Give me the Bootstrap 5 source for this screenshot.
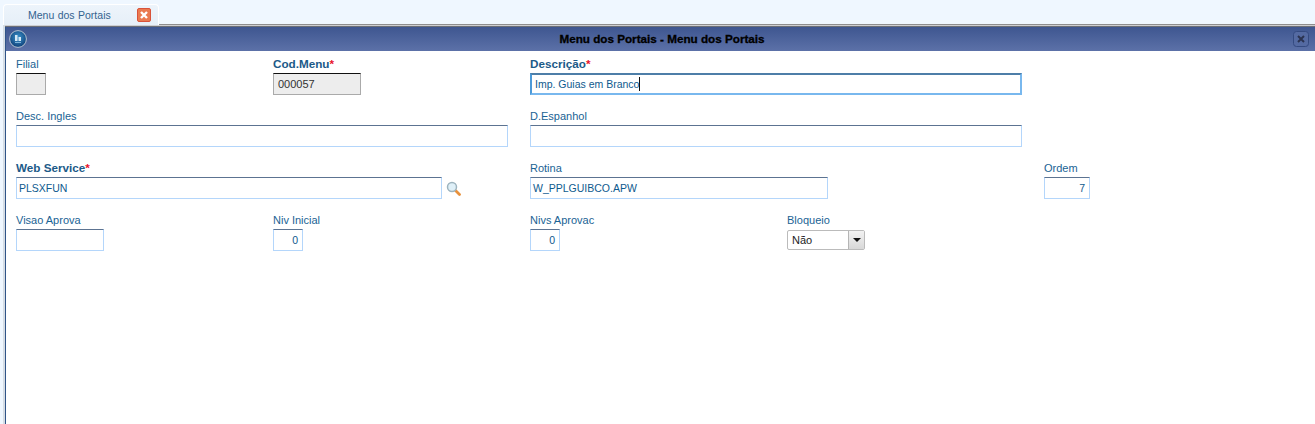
<!DOCTYPE html>
<html lang="pt">
<head>
<meta charset="utf-8">
<title>Menu dos Portais</title>
<link rel="stylesheet" href="https://cdn.jsdelivr.net/npm/bootstrap@5.3.0/dist/css/bootstrap.min.css">
<style>
html,body{height:100%;overflow:hidden}
body{background:#eff7ff;font-family:"Liberation Sans",Arial,sans-serif;font-size:11px;color:#0e5a8e;display:flex;flex-direction:column}
.tabbar{height:24px;padding:4px 0 0 3px;flex:none}
.tabitem{width:156px;height:21px;background:linear-gradient(#edf4fb,#e6eff8);border:1px solid #fff;border-bottom:0;border-radius:4px 4px 0 0;padding-left:24px;color:#33638f;font-size:10.5px;word-spacing:.5px;line-height:20px;position:relative;z-index:1}
.tabclose{width:14px;height:14px;margin-right:7px;flex:none;display:block}
.appwin{flex:1;margin-left:3px;background:#fff;border-top:1px solid #8d8d8d;border-left:2px solid #d5dde5;box-shadow:inset 1px 0 0 #2f5488;position:relative}
.appwin::before{content:"";display:block;height:2px;background:linear-gradient(#fff,#3a3f4a)}
.wintitle{height:24px;background:linear-gradient(#3e5690,#5c71a8);padding:0 6px 0 3px;margin-left:1px}
.wintitle-text{color:#000;font-weight:700;font-size:11.7px;-webkit-text-stroke:.3px #000;padding-left:4px}
.winlogo,.winx{flex:none;display:block}
.formgrid{display:grid;grid-template-columns:repeat(5,257px);grid-auto-rows:52px;padding:7px 0 0 10px;margin-left:1px}
.fld{display:flex;flex-direction:column;align-items:flex-start}
.fld-wide{grid-column:span 2}
.fldlabel{height:15px;line-height:12px;font-size:11px;white-space:nowrap;color:#1a6394}
.fldlabel-req{font-weight:700;font-size:11.7px;color:#1c5a88}
.fldlabel-req i{color:#e8132c;font-style:normal}
.inp{height:22px;border:1px solid #b4d6fb;border-top:1px solid #5c7391;background:#fff;padding:0 2px;line-height:21px;font-size:10.5px;color:#0e5a8e;white-space:nowrap;overflow:hidden}
.inp-ro{background:#ededed;border-color:#aaa;border-top-color:#111;color:#333;padding-left:4px;font-size:11px}
.inp-focus{border:2px solid #79b8ee;border-top-color:#4d7ea8;border-left-color:#4d9ad8;line-height:19px;padding:0 3px}
.inp-num{text-align:right;padding-right:4px}
.w30{width:30px}.w46{width:46px}.w88{width:88px}.w298{width:298px}.w426{width:426px}.w492{width:492px}
.caret{display:inline-block;width:1px;height:14px;background:#111;vertical-align:-3px}
.lookup{display:flex;align-items:center;gap:4px}
.lookup svg{display:block;flex:none}
.combo{width:78px;height:20px;border:1px solid #bbb;border-radius:2px;background:#fff;display:flex;font-size:11px;color:#222;line-height:18px;margin-top:1px}
.combo-val{flex:1;padding-left:4px}
.combo-btn{width:16px;background:linear-gradient(#f2f2f2,#d8d8d8);border-left:1px solid #b5b5b5;display:flex;align-items:center;justify-content:center}
.combo-btn::after{content:"";border:4px solid transparent;border-top:4px solid #111;border-bottom:0}
</style>
</head>
<body>
<div class="tabbar">
  <div class="tabitem d-flex align-items-center justify-content-between">
    <span>Menu dos Portais</span>
    <svg class="tabclose" viewBox="0 0 14 14"><rect x=".5" y=".5" width="13" height="13" rx="1.5" fill="#ea7a50" stroke="#d9533a"/><path d="M4 4l6 6M10 4l-6 6" stroke="#fff" stroke-width="2.4"/></svg>
  </div>
</div>
<div class="appwin">
  <div class="wintitle d-flex align-items-center justify-content-between">
    <svg class="winlogo" width="18" height="18" viewBox="0 0 18 18"><defs><radialGradient id="orb" cx=".5" cy=".4" r=".6"><stop offset="0" stop-color="#3d94cc"/><stop offset="1" stop-color="#0d3f78"/></radialGradient></defs><circle cx="9" cy="9" r="8.4" fill="url(#orb)" stroke="#b6c2d0"/><path d="M6 5h2.5v6H6zM9.5 7H12v4H9.500z" fill="#d5e8f6"/><path d="M6 12.500h6" stroke="#7fb4da"/></svg>
    <span class="wintitle-text">Menu dos Portais - Menu dos Portais</span>
    <svg class="winx" width="16" height="16" viewBox="0 0 16 16"><rect x=".5" y=".5" width="15" height="15" rx="3" fill="#546aa2" stroke="#344a80"/><path d="M5 5l6 6M11 5l-6 6" stroke="#2b3350" stroke-width="2"/></svg>
  </div>
  <div class="formgrid">
    <div class="fld"><div class="fldlabel">Filial</div><div class="inp inp-ro w30"></div></div>
    <div class="fld"><div class="fldlabel fldlabel-req">Cod.Menu<i>*</i></div><div class="inp inp-ro w88">000057</div></div>
    <div class="fld fld-wide"><div class="fldlabel fldlabel-req">Descrição<i>*</i></div><div class="inp inp-focus w492">Imp. Guias em Branco<span class="caret"></span></div></div>
    <div></div>

    <div class="fld fld-wide"><div class="fldlabel">Desc. Ingles</div><div class="inp w492"></div></div>
    <div class="fld fld-wide"><div class="fldlabel">D.Espanhol</div><div class="inp w492"></div></div>
    <div></div>

    <div class="fld fld-wide"><div class="fldlabel fldlabel-req">Web Service<i>*</i></div>
      <div class="lookup"><div class="inp w426">PLSXFUN</div>
        <svg width="15" height="15" viewBox="0 0 15 15"><path d="M9.500 9.500l4 4" stroke="#e8913c" stroke-width="2.8" stroke-linecap="round"/><circle cx="6" cy="6" r="4.500" fill="#dff0f8" stroke="#9db4bf" stroke-width="1.500"/></svg>
      </div>
    </div>
    <div class="fld fld-wide"><div class="fldlabel">Rotina</div><div class="inp w298">W_PPLGUIBCO.APW</div></div>
    <div class="fld"><div class="fldlabel">Ordem</div><div class="inp inp-num w46">7</div></div>

    <div class="fld"><div class="fldlabel">Visao Aprova</div><div class="inp w88"></div></div>
    <div class="fld"><div class="fldlabel">Niv Inicial</div><div class="inp inp-num w30">0</div></div>
    <div class="fld"><div class="fldlabel">Nivs Aprovac</div><div class="inp inp-num w30">0</div></div>
    <div class="fld"><div class="fldlabel">Bloqueio</div><div class="combo"><span class="combo-val">Não</span><span class="combo-btn"></span></div></div>
  </div>
</div>
<script src="https://cdn.jsdelivr.net/npm/bootstrap@5.3.0/dist/js/bootstrap.bundle.min.js"></script>
</body>
</html>
